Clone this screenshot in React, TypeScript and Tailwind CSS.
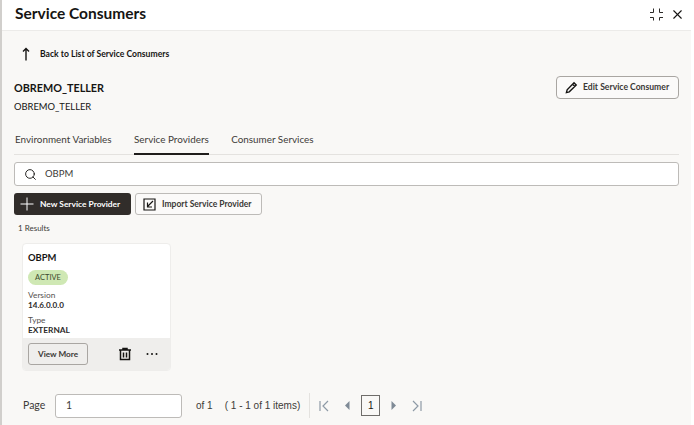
import { Search, X } from 'lucide-react';

const App = () => {
  return (
    <div className="flex h-[425px] w-[694px] overflow-hidden bg-white font-['Lato',sans-serif] text-[#161513]">
      {/* Left edge of the drawer */}
      <div className="w-[2px] shrink-0 bg-[#d1cfcc]" />

      <div className="flex w-[689px] shrink-0 flex-col">
        {/* Header */}
        <header className="flex h-[31px] shrink-0 items-center justify-between border-b border-[#ecebe9] bg-white pb-[2px] pl-[13px] pr-[6px]">
          <h1 className="text-[15.500px] font-bold leading-none">Service Consumers</h1>
          <div className="flex items-center gap-[7px]">
            <svg width="13" height="14" viewBox="0 0 13 14" fill="none" stroke="#2c2a28" strokeWidth="1">
              <path d="M0 5.500h3.500V1.500M13 5.500H9.500V1.500M0 10.500h3.500v3M13 10.500H9.500v3" />
            </svg>
            <X size={15} strokeWidth={1.800} />
          </div>
        </header>

        <main className="flex min-h-0 flex-1 flex-col bg-[#f9f8f6] pl-[12px] pr-[12px]">
          {/* Back link */}
          <div className="mt-[14px] flex h-[18px] items-center pl-[4px]">
            <svg width="16" height="16" viewBox="0 0 16 16" fill="none" stroke="#161513" strokeWidth="1.400">
              <path d="M10 14.500V2.500M7 5.500l3-3 3 3" transform="translate(-2 0)" />
            </svg>
            <span className="ml-[6px] text-[8.600px] font-bold leading-none">Back to List of Service Consumers</span>
          </div>

          {/* Title row */}
          <div className="mt-[13px] flex items-start justify-between">
            <div className="pt-[5px]">
              <div className="text-[10.800px] font-bold leading-[14px]">OBREMO_TELLER</div>
              <div className="mt-[5px] text-[9.400px] leading-[13px]">OBREMO_TELLER</div>
            </div>
            <button className="flex h-[23px] w-[123px] items-center rounded-[4px] border border-[#a9a6a2] bg-[#fbfaf9] pl-[8px]">
              <svg width="13" height="13" viewBox="0 0 14 14" fill="none" stroke="#161513" strokeWidth="1.500">
                <path d="M1.500 12.500l.8-3L9.700 2l2.400 2.400-7.500 7.300zM8.200 3.500l2.400 2.400" />
              </svg>
              <span className="ml-[5px] text-[8.600px] font-bold leading-none text-[#3a3835]">Edit Service Consumer</span>
            </button>
          </div>

          {/* Tabs */}
          <nav className="mt-[16px] flex h-[26px] shrink-0 gap-[22.500px] border-b border-[#e4e2df] pl-[1px] text-[9.900px]">
            <div className="pt-[3px] text-[#3d3b38]">Environment Variables</div>
            <div className="-mb-px border-b-2 border-[#1f1d1b] pt-[3px] text-[#3d3b38]">Service Providers</div>
            <div className="pt-[3px] text-[#3d3b38]">Consumer Services</div>
          </nav>

          {/* Search */}
          <div className="mt-[7px] flex h-[24px] shrink-0 items-center rounded-[3px] border border-[#bdbbb8] bg-white pl-[9px]">
            <Search size={13} strokeWidth={1.700} />
            <span className="ml-[8px] text-[9.500px] leading-none text-[#3d3b38]">OBPM</span>
          </div>

          {/* Actions */}
          <div className="mt-[7px] flex gap-[4px]">
            <button className="flex h-[22px] w-[117px] items-center rounded-[3px] bg-[#312d2a] pl-[6px] text-white">
              <svg width="14" height="14" viewBox="0 0 14 14" fill="none" stroke="#ffffff" strokeWidth="1">
                <path d="M7 .5v13M.5 7h13" />
              </svg>
              <span className="ml-[6px] text-[8.400px] font-bold leading-none">New Service Provider</span>
            </button>
            <button className="flex h-[22px] w-[127px] items-center rounded-[3px] border border-[#bdbbb8] bg-[#fbfaf9] pl-[7px]">
              <svg width="13" height="13" viewBox="0 0 13 13" fill="none" stroke="#161513" strokeWidth="1.200">
                <path d="M1 1h11v11H1zM10 3L4.500 8.500M4.500 4.500v4.500h4.500" />
              </svg>
              <span className="ml-[6px] text-[8.500px] font-bold leading-none text-[#3a3835]">Import Service Provider</span>
            </button>
          </div>

          <div className="mt-[8px] pl-[4px] text-[8px] leading-[11px] text-[#3d3b38]">1 Results</div>

          {/* Card */}
          <div className="ml-[8px] mt-[9px] flex h-[128px] w-[149px] shrink-0 flex-col overflow-hidden rounded-[4px] border border-[#eeedeb] bg-white">
            <div className="flex-1 pl-[5px] pt-[7px]">
              <div className="text-[9.400px] font-bold leading-[13px]">OBPM</div>
              <div className="mt-[6px] flex h-[15px] w-[40px] items-center justify-center rounded-full bg-[#cfe8b4] text-[7.500px] leading-none text-[#3b4a2c]">ACTIVE</div>
              <div className="mt-[5px] text-[8.300px] leading-[10px] text-[#55524e]">Version</div>
              <div className="text-[8.100px] font-bold leading-[10px] text-[#2c2a28]">14.6.0.0.0</div>
              <div className="mt-[5px] text-[8.300px] leading-[10px] text-[#55524e]">Type</div>
              <div className="text-[8.300px] font-bold leading-[10px] text-[#2c2a28]">EXTERNAL</div>
            </div>
            <div className="flex h-[32px] shrink-0 items-center bg-[#efeeec] pl-[5px]">
              <button className="flex h-[22px] w-[60px] items-center justify-center rounded-[3px] border border-[#a9a6a2] text-[8.200px] font-bold leading-none text-[#3a3835]">View More</button>
              <svg className="ml-[30px]" width="14" height="14" viewBox="0 0 14 14" fill="none" stroke="#161513" strokeWidth="1.500">
                <path d="M1 3h12M5 3V1.500h4V3M2.500 3v9.500h9V3M5.500 5.500v5M8.500 5.500v5" />
              </svg>
              <svg className="ml-[13px]" width="14" height="4" viewBox="0 0 14 4" fill="#161513">
                <circle cx="2.500" cy="2" r="1" />
                <circle cx="7" cy="2" r="1" />
                <circle cx="11.500" cy="2" r="1" />
              </svg>
            </div>
          </div>

          {/* Pagination */}
          <div className="mt-[22px] flex h-[25px] items-center pl-[9px] font-['Liberation_Sans',sans-serif] text-[10px] text-[#3d3b38]">
            <span className="w-[32px] font-['Lato',sans-serif] text-[10.500px]">Page</span>
            <div className="flex h-[24px] w-[127px] items-center rounded-[3px] border border-[#bdbbb8] bg-white pl-[10px] font-['Lato',sans-serif] text-[10.500px]">1</div>
            <span className="ml-[14px]">of 1</span>
            <span className="ml-[12px]">( 1 - 1 of 1 items)</span>
            <div className="ml-[9px] h-[25px] w-px bg-[#e4e2df]" />
            <div className="ml-[9px] flex items-center text-[#9a9895]">
              <svg width="10" height="12" viewBox="0 0 10 12" fill="none" stroke="#8e9aa6" strokeWidth="1.200">
                <path d="M1 1v10M9 1L4 6l5 5" />
              </svg>
              <svg className="ml-[16px]" width="5" height="9" viewBox="0 0 5 9" fill="#7f8a96">
                <path d="M4.500 0v9L0 4.500z" />
              </svg>
              <div className="ml-[11px] flex h-[21px] w-[19px] items-center justify-center border border-[#6f6d6a] text-[#161513]">1</div>
              <svg className="ml-[11px]" width="5" height="9" viewBox="0 0 5 9" fill="#7f8a96">
                <path d="M.5 0v9L5 4.500z" />
              </svg>
              <svg className="ml-[16px]" width="10" height="12" viewBox="0 0 10 12" fill="none" stroke="#8e9aa6" strokeWidth="1.200">
                <path d="M9 1v10M1 1l5 5-5 5" />
              </svg>
            </div>
          </div>
        </main>
      </div>
    </div>
  );
};

export default App;
